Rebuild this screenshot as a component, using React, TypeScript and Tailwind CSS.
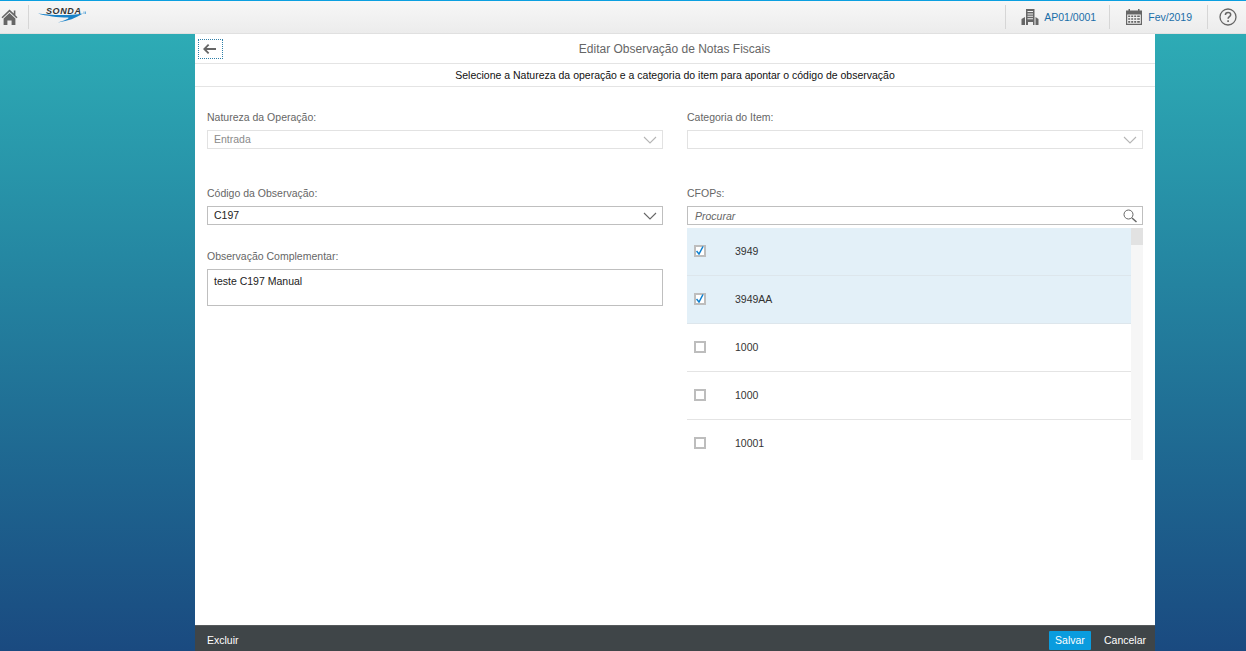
const rows = [
  { code: "3949", checked: true },
  { code: "3949AA", checked: true },
  { code: "1000", checked: false },
  { code: "1000", checked: false },
  { code: "10001", checked: false },
];

function HomeIcon() {
  return (
    <svg width="17" height="18" viewBox="0 0 17 18" fill="#666">
      <path d="M8.5 1.5 0.5 9.2 1.6 10.3 8.5 3.8 15.4 10.3 16.5 9.2 14.4 7.2V2.5H12.8V5.6Z" />
      <path d="M2.6 10.6 8.5 5 14.4 10.6V17H10.6V12.4H6.4V17H2.6Z" />
    </svg>
  );
}

function BuildingIcon() {
  return (
    <svg width="18" height="18" viewBox="0 0 18 18" fill="#666">
      <path d="M5 1h8.5v16H12v-3H7v3H5ZM6.500 3v1h5.500V3Zm0 2.400v1h5.500v-1Zm0 2.400v1h5.500v-1Zm0 2.400v1h5.500v-1Z" fillRule="evenodd" />
      <path d="M0.500 11 4 9v8H0.500ZM14.500 9 17.500 11v6h-3Z" />
    </svg>
  );
}

function CalendarIcon() {
  return (
    <svg width="18" height="18" viewBox="0 0 18 18" fill="#666">
      <path d="M1 2.500h2.500V1h1.500v1.500h8V1h1.500v1.500H17V17H1ZM2.200 6.500v9.300h13.600V6.500Z" fillRule="evenodd" />
      <path d="M3.200 7.500h2v1.600h-2ZM6.200 7.500h2v1.600h-2ZM9.200 7.500h2v1.600h-2ZM12.200 7.500h2.600v1.600h-2.600ZM3.200 10.200h2v1.600h-2ZM6.200 10.200h2v1.600h-2ZM9.200 10.200h2v1.600h-2ZM12.200 10.200h2.600v1.600h-2.600ZM3.200 12.900h2v1.800h-2ZM6.200 12.900h2v1.800h-2ZM9.200 12.900h2v1.800h-2ZM12.200 12.900h2.600v1.800h-2.600Z" />
    </svg>
  );
}

function HelpIcon() {
  return (
    <svg width="18" height="18" viewBox="0 0 18 18" fill="none" stroke="#666">
      <circle cx="9" cy="9" r="8" strokeWidth="1.3" />
      <path d="M6.400 7c0-1.600 1.200-2.500 2.700-2.500s2.600.9 2.600 2.200c0 1.900-2.600 2-2.600 4.100" strokeWidth="1.500" />
      <path d="M9.100 12.300v1.700" strokeWidth="1.600" />
    </svg>
  );
}

function BackArrow() {
  return (
    <svg width="13" height="10" viewBox="0 0 13 10" fill="#666" className="mr-[2px]">
      <path d="M5 0 6.300 1.200 3.600 4H13v2H3.600l2.700 2.800L5 10 0 5Z" />
    </svg>
  );
}

function Chevron({ color }: { color: string }) {
  return (
    <svg width="14" height="8" viewBox="0 0 14 8" fill="none" stroke={color} strokeWidth="1.100">
      <path d="M1 1 7 7 13 1" />
    </svg>
  );
}

function Logo() {
  return (
    <div className="relative h-[20px] w-[48px]">
      <svg className="absolute left-0 top-[2px]" width="48" height="16" viewBox="0 0 48 16">
        <path d="M0 5.500C10 7 30 8 45 5.500 38 10 30 13 20 14.500 28 12 32 10 30 9.500 20 9.500 8 8 0 5.500Z" fill="#1a82c8" />
        <path d="M45.500 3.500h1v2.500h-1ZM47 3.500h1v2.500h-1Z" fill="#6aaedc" />
      </svg>
      <span className="absolute left-[8px] top-[1px] text-[9px] leading-[9px] font-bold italic tracking-[0.6px] text-[#333]">
        SONDA
      </span>
    </div>
  );
}

function Select({ value, disabled }: { value: string; disabled?: boolean }) {
  return (
    <div
      className={`flex h-[19px] items-center justify-between border pl-[6px] pr-[5px] ${
        disabled ? "border-[#e2e2e2] text-[#8a8a8a]" : "border-[#bfbfbf] text-[#222]"
      }`}
    >
      <span className="mb-px">{value}</span>
      <Chevron color={disabled ? "#b5b5b5" : "#666"} />
    </div>
  );
}

export default function App() {
  return (
    <div className="flex h-[651px] w-[1246px] flex-col overflow-hidden bg-gradient-to-b from-[#2fb1b8] to-[#1a4a80] font-['Liberation_Sans',Arial,sans-serif] text-[10.5px] leading-[14px]">
      {/* Top bar */}
      <header className="flex h-[34px] shrink-0 items-center justify-between border-t border-b border-t-[#0b9fe0] border-b-[#e0e0e0] bg-gradient-to-b from-[#f7f7f7] to-[#ececec]">
        <div className="flex h-full items-center">
          <div className="ml-[1px] w-[16px]">
            <HomeIcon />
          </div>
          <div className="ml-[11px] h-[24px] w-px bg-[#d6d6d6]" />
          <div className="ml-[9px] mb-[3px]">
            <Logo />
          </div>
        </div>
        <div className="flex h-full items-center text-[#1a6ea8]">
          <div className="h-[24px] w-px bg-[#d6d6d6]" />
          <div className="ml-[15px] flex items-center gap-[5px]">
            <BuildingIcon />
            <span>AP01/0001</span>
          </div>
          <div className="ml-[13px] h-[24px] w-px bg-[#d6d6d6]" />
          <div className="ml-[15px] flex items-center gap-[5px]">
            <CalendarIcon />
            <span>Fev/2019</span>
          </div>
          <div className="ml-[15px] h-[24px] w-px bg-[#d6d6d6]" />
          <div className="ml-[11px] mr-[9px]">
            <HelpIcon />
          </div>
        </div>
      </header>

      {/* Panel */}
      <main className="ml-[195px] flex w-[960px] flex-1 flex-col bg-white">
        <div className="relative flex h-[30px] shrink-0 items-center justify-center border-b border-[#e4e4e4] pr-[1px] text-[12px] text-[#666]">
          <button className="absolute left-[3px] top-[5px] flex h-[20px] w-[25px] items-center justify-center border border-dotted border-[#2f7fa8]">
            <BackArrow />
          </button>
          Editar Observação de Notas Fiscais
        </div>
        <div className="flex h-[23px] shrink-0 items-center justify-center border-b border-[#e4e4e4] text-[#111]">
          Selecione a Natureza da operação e a categoria do item para apontar o código de observação
        </div>

        <div className="grid flex-1 grid-cols-2 gap-x-[24px] px-[12px] pt-[23px] text-[#666]">
          {/* Left column */}
          <div>
            <label className="mb-[6px] block">Natureza da Operação:</label>
            <Select value="Entrada" disabled />
            <label className="mb-[6px] mt-[37px] block">Código da Observação:</label>
            <Select value="C197" />
            <label className="mb-[6px] mt-[24px] block">Observação Complementar:</label>
            <div className="h-[37px] border border-[#bfbfbf] px-[6px] pt-[4px] text-[#222]">teste C197 Manual</div>
          </div>

          {/* Right column */}
          <div>
            <label className="mb-[6px] block">Categoria do Item:</label>
            <Select value="" disabled />
            <label className="mb-[6px] mt-[37px] block">CFOPs:</label>
            <div className="flex h-[19px] items-center justify-between border border-[#bfbfbf] pl-[7px] pr-[5px] italic">
              <span>Procurar</span>
              <svg width="14" height="14" viewBox="0 0 14 14" fill="none" stroke="#666">
                <circle cx="5.500" cy="5.500" r="4.500" />
                <path d="M9 9l4.500 4" strokeWidth="1.500" />
              </svg>
            </div>
            <div className="mt-[3px] flex h-[232px] overflow-hidden">
              <div className="flex-1">
                {rows.map((row, i) => (
                  <div
                    key={i}
                    className={`flex h-[48px] items-center border-b pb-[2px] pl-[7px] text-[#333] ${
                      row.checked ? "border-[#dde6ec] bg-[#e3f0f8]" : "border-[#e4e4e4] bg-white"
                    }`}
                  >
                    <span className="flex h-[12px] w-[12px] items-center justify-center border-2 border-[#bdbdbd] bg-white">
                      {row.checked && (
                        <svg width="8" height="9" viewBox="0 0 8 9" fill="none" stroke="#0a7fd0" strokeWidth="1.500" className="shrink-0">
                          <path d="M0.500 5 3 8 7 0.500" />
                        </svg>
                      )}
                    </span>
                    <span className="ml-[29px]">{row.code}</span>
                  </div>
                ))}
              </div>
              <div className="w-[12px] bg-[#f6f6f6]">
                <div className="h-[17px] bg-[#e2e2e2]" />
              </div>
            </div>
          </div>
        </div>

        {/* Footer */}
        <footer className="flex h-[26px] shrink-0 items-end justify-between border-t border-[#55595b] bg-[#3f4548] pb-px pl-[12px] pr-[9px] leading-[19px] text-white">
          <span>Excluir</span>
          <div className="flex items-center">
            <span className="flex h-[19px] w-[42px] items-center justify-center rounded-[1px] bg-[#0a9cde]">Salvar</span>
            <span className="ml-[13px]">Cancelar</span>
          </div>
        </footer>
      </main>
    </div>
  );
}
